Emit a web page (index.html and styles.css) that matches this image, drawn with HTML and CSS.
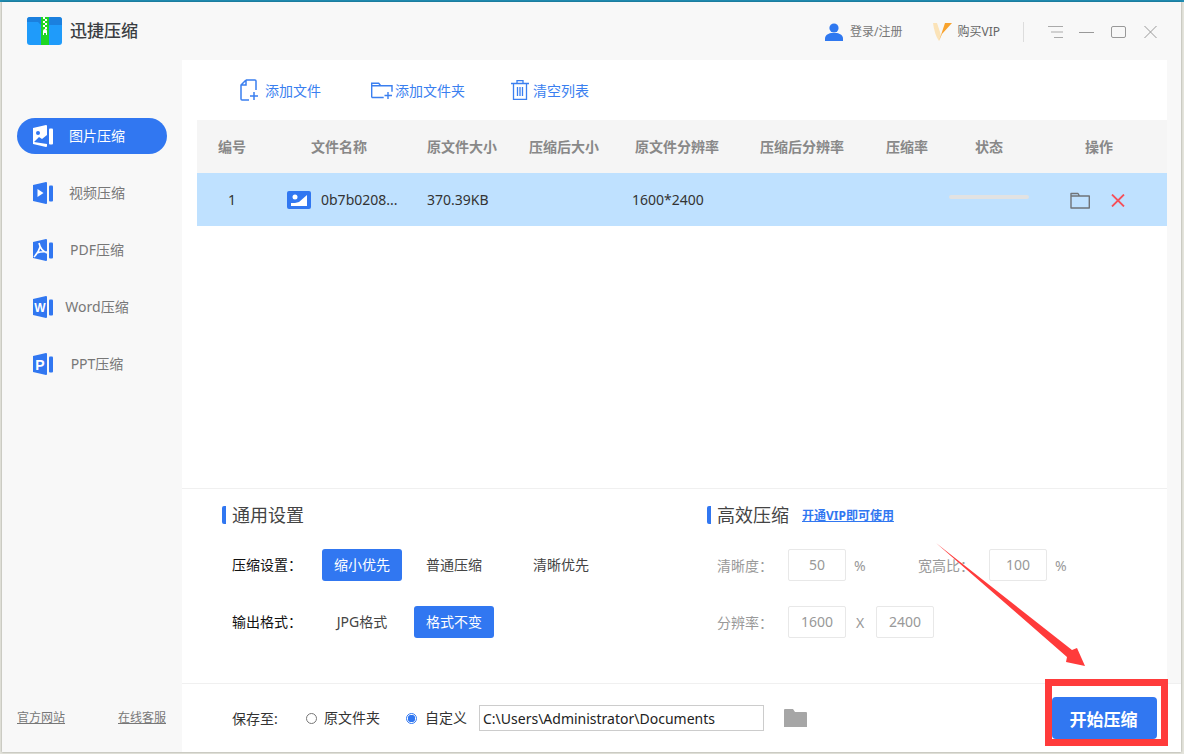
FILE: index.html
```html
<!DOCTYPE html>
<html lang="zh-CN">

<head>
    <meta charset="UTF-8">
    <title>迅捷压缩</title>
    <link rel="stylesheet" href="styles.css">
</head>

<body>
    <div class="window">
        <div class="titlebar">
            <svg class="logo" viewBox="0 0 35 28">
                <rect width="35" height="28" rx="3" fill="#1f9bfa" />
                <path d="M0 8V3a3 3 0 0 1 3-3h29a3 3 0 0 1 3 3v5H14l-3-3H0z" fill="#1b80de" />
                <rect x="14" width="8" height="28" fill="#1fd622" />
                <path d="M16 0h2v2h-2zM18 2h2v2h-2zM16 4h2v2h-2zM18 6h2v2h-2zM16 8h2v2h-2zM18 10h2v2h-2z" fill="#fff" />
                <path d="M16 18v-4a2 2 0 0 1 4 0v4h-1v-2h-2v2z" fill="#fff" />
            </svg>
            <span class="app-name">迅捷压缩</span>
            <div class="title-actions">
                <svg class="user-icon" viewBox="0 0 18 18">
                    <circle cx="9" cy="5" r="4.6" fill="#2f78f0" />
                    <path d="M0 18v-2.5C0 12.500 3 10.500 6 10h6c3 .5 6 2.500 6 5.500V18z" fill="#2f78f0" />
                </svg>
                <span class="title-link login-link">登录/注册</span>
                <svg class="vip-icon" viewBox="0 0 19 18">
                    <path d="M0 0h4l3 9 1 4-2 5C3 14 1 7 0 0z" fill="#fbe3b8" />
                    <path d="M6 18 12 0h7L9 11z" fill="#f8a32e" />
                </svg>
                <span class="title-link vip-link">购买VIP</span>
                <span class="title-divider"></span>
                <svg class="win-btn menu-btn" viewBox="0 0 15 12">
                    <path d="M0 .5h15M3 6h12M6 11.500h9" stroke="#aaa" fill="none" />
                </svg>
                <svg class="win-btn min-btn" viewBox="0 0 15 12">
                    <path d="M0 6.500h15" stroke="#999" fill="none" />
                </svg>
                <svg class="win-btn max-btn" viewBox="0 0 15 12">
                    <rect x=".5" y=".5" width="14" height="11" rx="1.500" stroke="#999" fill="none" />
                </svg>
                <svg class="win-btn close-btn" viewBox="0 0 13 12">
                    <path d="M.5 0 12.500 12M12.500 0 .5 12" stroke="#999" fill="none" />
                </svg>
            </div>
        </div>

        <div class="content">
            <div class="sidebar">
                <div class="nav">
                    <div class="nav-item active">
                        <svg class="nav-icon" viewBox="0 0 20 22">
                            <path class="page" d="M0 3 13 0a1 1 0 0 1 1 1v20a1 1 0 0 1-1 1L0 19z" />
                            <rect class="page" x="16" y="3.500" width="4" height="16" rx="1" />
                            <circle cx="5" cy="8" r="2" fill="#3177f1" />
                            <path d="M1 17 6 12l3 2 5-4v9z" fill="#3177f1" />
                        </svg>
                        <span class="nav-label">图片压缩</span>
                    </div>
                    <div class="nav-item">
                        <svg class="nav-icon" viewBox="0 0 20 22">
                            <path class="page" d="M0 3 13 0a1 1 0 0 1 1 1v20a1 1 0 0 1-1 1L0 19z" />
                            <rect class="page" x="16" y="3.500" width="4" height="16" rx="1" />
                            <path d="M4.500 7v8l6-4z" fill="#fff" />
                        </svg>
                        <span class="nav-label">视频压缩</span>
                    </div>
                    <div class="nav-item">
                        <svg class="nav-icon" viewBox="0 0 20 22">
                            <path class="page" d="M0 3 13 0a1 1 0 0 1 1 1v20a1 1 0 0 1-1 1L0 19z" />
                            <rect class="page" x="16" y="3.500" width="4" height="16" rx="1" />
                            <path d="M6 4C7 9 9 12 14 14M7 8C6 12 4 15 1 18M4 14C8 12.500 11 12.500 14 13" fill="none" stroke="#fff" stroke-width="1.600" />
                        </svg>
                        <span class="nav-label">PDF压缩</span>
                    </div>
                    <div class="nav-item">
                        <svg class="nav-icon" viewBox="0 0 20 22">
                            <path class="page" d="M0 3 13 0a1 1 0 0 1 1 1v20a1 1 0 0 1-1 1L0 19z" />
                            <rect class="page" x="16" y="3.500" width="4" height="16" rx="1" />
                            <text class="nav-letter" x="7" y="16" font-size="12">W</text>
                        </svg>
                        <span class="nav-label">Word压缩</span>
                    </div>
                    <div class="nav-item">
                        <svg class="nav-icon" viewBox="0 0 20 22">
                            <path class="page" d="M0 3 13 0a1 1 0 0 1 1 1v20a1 1 0 0 1-1 1L0 19z" />
                            <rect class="page" x="16" y="3.500" width="4" height="16" rx="1" />
                            <text class="nav-letter" x="7" y="16.500" font-size="14">P</text>
                        </svg>
                        <span class="nav-label">PPT压缩</span>
                    </div>
                </div>
                <div class="side-links">
                    <a>官方网站</a>
                    <a>在线客服</a>
                </div>
            </div>

            <div class="main">
                <div class="panel">
                    <div class="toolbar">
                        <div class="tool tool-file">
                            <svg width="18" height="22" viewBox="0 0 18 22">
                                <path d="M6 1H15a1 1 0 0 1 1 1v9M6 1 1 6v14a1 1 0 0 0 1 1h7M6 1v5H1M14 13v8M10 17h8" fill="none" stroke="#3a7ff0" stroke-width="1.500" />
                            </svg>
                            <span>添加文件</span>
                        </div>
                        <div class="tool tool-folder">
                            <svg width="22" height="17" viewBox="0 0 22 17">
                                <path d="M.7 15.500V1.200h7l2 2.500H21v6M.7 15.500h12M.7 3.700h9M17 10v7M13.500 13.500h7.500" fill="none" stroke="#3a7ff0" stroke-width="1.400" />
                            </svg>
                            <span>添加文件夹</span>
                        </div>
                        <div class="tool tool-clear">
                            <svg width="18" height="20" viewBox="0 0 18 20">
                                <path d="M0 3.500h18M6 3V.7h6V3M2.500 4v15.300h13V4M6.500 7v9M9 7v9M11.500 7v9" fill="none" stroke="#3a7ff0" stroke-width="1.300" />
                            </svg>
                            <span>清空列表</span>
                        </div>
                    </div>

                    <div class="table">
                        <div class="table-row table-head">
                            <div>编号</div>
                            <div>文件名称</div>
                            <div>原文件大小</div>
                            <div>压缩后大小</div>
                            <div>原文件分辨率</div>
                            <div>压缩后分辨率</div>
                            <div>压缩率</div>
                            <div>状态</div>
                            <div class="head-ops">操作</div>
                        </div>
                        <div class="table-row file-row">
                            <div>1</div>
                            <div class="cell-name">
                                <svg width="24" height="18" viewBox="0 0 24 18">
                                    <rect width="24" height="18" rx="2" fill="#3177f1" />
                                    <circle cx="8" cy="6" r="2.500" fill="#fff" />
                                    <path d="M4 15v-3l4 0 4-1 8-7v11z" fill="#fff" />
                                </svg>
                                <span>0b7b0208...</span>
                            </div>
                            <div class="cell-left">370.39KB</div>
                            <div></div>
                            <div class="cell-left cell-res">1600*2400</div>
                            <div></div>
                            <div></div>
                            <div class="cell-status"><span class="progress"></span></div>
                            <div class="cell-ops">
                                <svg width="20" height="17" viewBox="0 0 20 17">
                                    <path d="M1 16V1.500h7l1.500 2.500H19.300v12zM1 4h8.500" fill="none" stroke="#6f7378" stroke-width="1.400" stroke-linejoin="round" />
                                </svg>
                                <svg width="14" height="13" viewBox="0 0 14 13">
                                    <path d="M1 .5 13 12.500M13 .5 1 12.500" stroke="#f5505a" stroke-width="1.800" fill="none" />
                                </svg>
                            </div>
                        </div>
                    </div>

                    <div class="settings">
                        <div class="settings-col col-general">
                            <h2 class="section-title">通用设置</h2>
                            <div class="setting-row">
                                <span class="setting-label">压缩设置：</span>
                                <span class="opt active">缩小优先</span>
                                <span class="opt">普通压缩</span>
                                <span class="opt opt-last">清晰优先</span>
                            </div>
                            <div class="setting-row">
                                <span class="setting-label">输出格式：</span>
                                <span class="opt">JPG格式</span>
                                <span class="opt active">格式不变</span>
                            </div>
                        </div>
                        <div class="settings-col col-vip">
                            <h2 class="section-title">高效压缩<a class="vip-open">开通VIP即可使用</a></h2>
                            <div class="setting-row">
                                <span class="vip-label">清晰度：</span>
                                <span class="num-box">50</span>
                                <span class="unit unit-wide">%</span>
                                <span class="vip-label">宽高比：</span>
                                <span class="num-box">100</span>
                                <span class="unit">%</span>
                            </div>
                            <div class="setting-row">
                                <span class="vip-label">分辨率：</span>
                                <span class="num-box">1600</span>
                                <span class="unit unit-x">X</span>
                                <span class="num-box">2400</span>
                            </div>
                        </div>
                    </div>
                </div>

                <div class="footer">
                    <span class="save-label">保存至:</span>
                    <span class="radio"></span>
                    <span class="radio-text">原文件夹</span>
                    <span class="radio checked"></span>
                    <span class="radio-text">自定义</span>
                    <input class="path-input" type="text" value="C:\Users\Administrator\Documents">
                    <svg class="browse" width="23" height="18" viewBox="0 0 23 18">
                        <path d="M0 1a1 1 0 0 1 1-1h8l2 3h11a1 1 0 0 1 1 1v14H0z" fill="#a6a6a6" />
                    </svg>
                    <button class="start-btn">开始压缩</button>
                </div>
            </div>
        </div>

        <!-- annotation drawn over the screenshot -->
        <svg class="arrow" width="160" height="130" viewBox="0 0 160 130">
            <polygon points="0,0 136,107 141,105 149,123 130,119 131,114" fill="#ff3b3b" />
        </svg>
        <div class="highlight"></div>
    </div>
</body>

</html>
```

FILE: styles.css
```css
* {
    box-sizing: border-box;
}

html {
    background: linear-gradient(#1f8db3 2px, #e4e4dc 2px);
}

body {
    margin: 0;
    padding: 2px 3px 2px 2px;
    height: 754px;
    overflow: hidden;
    font-family: "Noto Sans", "Noto Sans CJK SC", sans-serif;
    font-size: 14px;
    color: #333;
}

.window {
    position: relative;
    height: 750px;
    background-color: #f8f8f8;
    display: flex;
    flex-direction: column;
    box-shadow: 0 0 2px rgba(0, 0, 0, 0.35);
}

/* title bar */
.titlebar {
    height: 58px;
    flex: none;
    display: flex;
    align-items: center;
    padding-left: 25px;
}

.logo {
    width: 35px;
    height: 28px;
}

.app-name {
    margin-left: 8px;
    font-size: 17px;
    font-weight: 500;
    line-height: 24px;
    color: #3a3d42;
}

.title-actions {
    margin-left: auto;
    display: flex;
    align-items: center;
    margin-top: 2px;
}

.user-icon {
    width: 18px;
    height: 18px;
}

.title-link {
    font-size: 12px;
    line-height: 18px;
    color: #777;
}

.login-link {
    margin-left: 7px;
}

.vip-icon {
    width: 19px;
    height: 18px;
    margin-left: 31px;
}

.vip-link {
    margin-left: 5px;
    color: #666;
}

.title-divider {
    width: 1px;
    height: 20px;
    margin-left: 23px;
    background-color: #ddd;
}

.win-btn {
    height: 12px;
    flex: none;
}

.menu-btn {
    width: 15px;
    margin-left: 24px;
}

.min-btn {
    width: 15px;
    margin-left: 16px;
}

.max-btn {
    width: 15px;
    margin-left: 17px;
}

.close-btn {
    width: 13px;
    margin-left: 18px;
    margin-right: 24px;
}

.content {
    flex: 1;
    display: flex;
    min-height: 0;
}

/* sidebar */
.sidebar {
    width: 180px;
    flex: none;
    display: flex;
    flex-direction: column;
    padding: 58px 15px 0;
}

.nav {
    display: flex;
    flex-direction: column;
    gap: 21px;
}

.nav-item {
    width: 150px;
    height: 36px;
    display: flex;
    align-items: center;
    padding-left: 16px;
    border-radius: 18px;
    color: #777;
}

.nav-item.active {
    background-color: #3177f1;
    color: #fff;
}

.nav-icon {
    width: 20px;
    height: 22px;
    flex: none;
}

.page {
    fill: #3177f1;
}

.active .page {
    fill: #fff;
}

.nav-letter {
    fill: #fff;
    font-family: "Liberation Sans", sans-serif;
    font-weight: 700;
    text-anchor: middle;
}

.nav-label {
    width: 80px;
    margin-left: 4px;
    text-align: center;
    line-height: 20px;
}

.side-links {
    margin-top: auto;
    display: flex;
    justify-content: space-between;
    width: 149px;
    padding-bottom: 26px;
    font-size: 12px;
    line-height: 16px;
    color: #777;
}

.side-links a {
    text-decoration: underline;
}

/* main area */
.main {
    flex: 1;
    display: flex;
    flex-direction: column;
    min-width: 0;
}

.panel {
    flex: 1;
    margin-right: 14px;
    background-color: #fff;
    display: flex;
    flex-direction: column;
}

.toolbar {
    height: 60px;
    flex: none;
    display: flex;
    align-items: center;
    color: #3a7ff0;
}

.tool {
    display: flex;
    align-items: center;
    line-height: 20px;
}

.tool span {
    margin-top: 2px;
}

.tool-file {
    margin-left: 58px;
}

.tool-file span {
    margin-left: 7px;
}

.tool-folder {
    margin-left: 50px;
}

.tool-folder span {
    margin-left: 2px;
}

.tool-clear {
    margin-left: 46px;
}

.tool-clear span {
    margin-left: 4px;
}

.table {
    margin-left: 15px;
    flex: 1;
}

.table-row {
    height: 53px;
    display: grid;
    grid-template-columns: 70px 144px 102px 102px 124px 126px 84px 80px 138px;
    align-items: center;
    text-align: center;
}

.table-head {
    padding-bottom: 2px;
    background-color: #f5f5f5;
    color: #888;
    font-weight: 700;
}

.head-ops {
    padding-left: 2px;
}

.file-row {
    background-color: #bfe1ff;
    color: #333;
}

.cell-name {
    display: flex;
    align-items: center;
    padding-left: 20px;
    gap: 10px;
    white-space: nowrap;
}

.cell-left {
    text-align: left;
    padding-left: 16px;
}

.cell-res {
    padding-left: 17px;
}

.cell-status {
    align-self: start;
    padding-top: 22px;
    line-height: 0;
}

.progress {
    display: block;
    height: 4px;
    border-radius: 2px;
    background-color: #e2e2e2;
}

.cell-ops {
    display: flex;
    align-items: center;
    gap: 21px;
    padding-left: 41px;
    margin-top: 2px;
}

/* settings */
.settings {
    height: 195px;
    flex: none;
    border-top: 1px solid #f0f0f0;
    display: flex;
}

.settings-col {
    display: flex;
    flex-direction: column;
}

.col-general {
    width: 525px;
    padding-left: 40px;
}

.section-title {
    margin: 17px 0 25px;
    height: 18px;
    border-left: 4px solid #3177f1;
    border-radius: 2px 0 0 2px;
    padding-left: 6px;
    font-size: 18px;
    font-weight: 400;
    line-height: 18px;
    color: #444;
    display: flex;
    align-items: center;
    white-space: nowrap;
}

.setting-row {
    height: 32px;
    display: flex;
    align-items: center;
    margin-bottom: 25px;
}

.setting-label {
    width: 100px;
    padding-left: 10px;
    padding-bottom: 2px;
    color: #111;
}

.opt {
    width: 80px;
    height: 32px;
    margin-right: 12px;
    border-radius: 3px;
    text-align: center;
    line-height: 32px;
    color: #444;
}

.opt.active {
    background-color: #3177f1;
    color: #fff;
}

.opt-last {
    margin-left: 15px;
}

.vip-open {
    margin-left: 13px;
    margin-top: 2px;
    font-size: 12px;
    font-weight: 700;
    color: #3177f1;
    text-decoration: underline;
}

.vip-label {
    width: 81px;
    padding-left: 10px;
    color: #999;
}

.num-box {
    width: 58px;
    height: 32px;
    border: 1px solid #e8e8e8;
    border-radius: 2px;
    text-align: center;
    line-height: 30px;
    color: #999;
}

.unit {
    padding-left: 8px;
    color: #999;
}

.unit-wide {
    width: 62px;
}

.unit-x {
    width: 30px;
    padding-left: 10px;
}

/* footer */
.footer {
    height: 69px;
    flex: none;
    background-color: #fff;
    border-top: 1px solid #f0f0f0;
    display: flex;
    align-items: center;
    padding-left: 50px;
}

.save-label {
    width: 74px;
    color: #333;
}

.radio {
    width: 11px;
    height: 11px;
    border: 1px solid #777;
    border-radius: 50%;
    background-color: #fff;
    flex: none;
}

.radio.checked {
    border-color: #3177f1;
    background: radial-gradient(#3177f1 3.500px, #fff 4px);
}

.radio-text {
    margin-left: 7px;
    color: #333;
    line-height: 20px;
}

.radio-text + .radio {
    margin-left: 26px;
}

.radio.checked + .radio-text {
    margin-left: 8px;
}

.path-input {
    width: 285px;
    height: 26px;
    margin-left: 12px;
    padding: 0 3px;
    border: 1px solid #ccc;
    font-family: inherit;
    font-size: 14px;
    color: #222;
    outline: none;
}

.browse {
    margin-left: 20px;
}

.start-btn {
    width: 105px;
    height: 42px;
    margin-left: auto;
    margin-right: 24px;
    padding: 0 2px 0 0;
    border: none;
    border-radius: 4px;
    background-color: #3177f1;
    color: white;
    font-family: inherit;
    font-size: 17px;
    font-weight: 700;
}

/* red annotation */
.arrow {
    position: absolute;
    left: 934px;
    top: 541px;
    pointer-events: none;
}

.highlight {
    position: absolute;
    left: 1043px;
    top: 677px;
    width: 123px;
    height: 67px;
    border: 7px solid #ff3b3b;
    pointer-events: none;
}
```
